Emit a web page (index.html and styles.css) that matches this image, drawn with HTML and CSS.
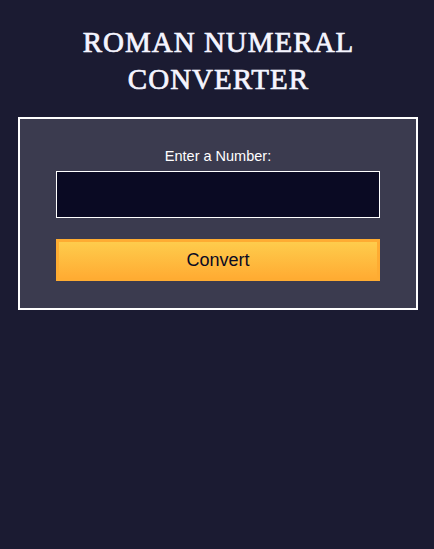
FILE: index.html
```html
<!DOCTYPE html>
<html lang="en">
<head>
<meta charset="utf-8">
<title>Roman Numeral Converter</title>
<link rel="stylesheet" href="styles.css">
</head>
<body>
<main class="page">
  <h1 class="title">Roman Numeral<br>Converter</h1>
  <form class="card">
    <label class="label" for="number">Enter a Number:</label>
    <input class="input" id="number" type="number">
    <button class="btn" type="button">Convert</button>
  </form>
</main>
</body>
</html>
```
FILE: styles.css
```css
* { box-sizing: border-box; }
html, body { margin: 0; padding: 0; }
body {
  background: #1b1b32;
  color: #ffffff;
  font-family: "Liberation Sans", Arial, sans-serif;
  min-height: 100vh;
}
.page {
  display: flex;
  flex-direction: column;
  align-items: center;
  padding: 24px 16px 0 18px;
}
.title {
  margin: 0;
  padding-left: 1px;
  font-family: "Liberation Serif", "Times New Roman", serif;
  font-weight: normal;
  text-transform: uppercase;
  font-size: 29px;
  letter-spacing: 1px;
  line-height: 37px;
  text-align: center;
  color: #f5f5ff;
  -webkit-text-stroke: 0.7px #f5f5ff;
}
.card {
  margin-top: 19px;
  width: 400px;
  align-self: flex-start;
  background: #3b3b4f;
  border: 2px solid #ffffff;
  display: flex;
  flex-direction: column;
  align-items: center;
  padding: 28px 36px 27px;
}
.label {
  font-size: 14.5px;
  line-height: 18px;
  color: #ffffff;
}
.input {
  margin-top: 6px;
  width: 324px;
  height: 47px;
  background: #0a0a23;
  border: 1px solid #ffffff;
  outline: none;
  color: #fff;
  font-size: 20px;
  padding: 0 8px;
}
.btn {
  margin-top: 21px;
  width: 324px;
  height: 42px;
  background: linear-gradient(#fecc4c, #ffac33);
  border: 3px solid #feac32;
  color: #0a0a23;
  font-family: "Liberation Sans", Arial, sans-serif;
  font-size: 18px;
  padding: 0;
}
```
